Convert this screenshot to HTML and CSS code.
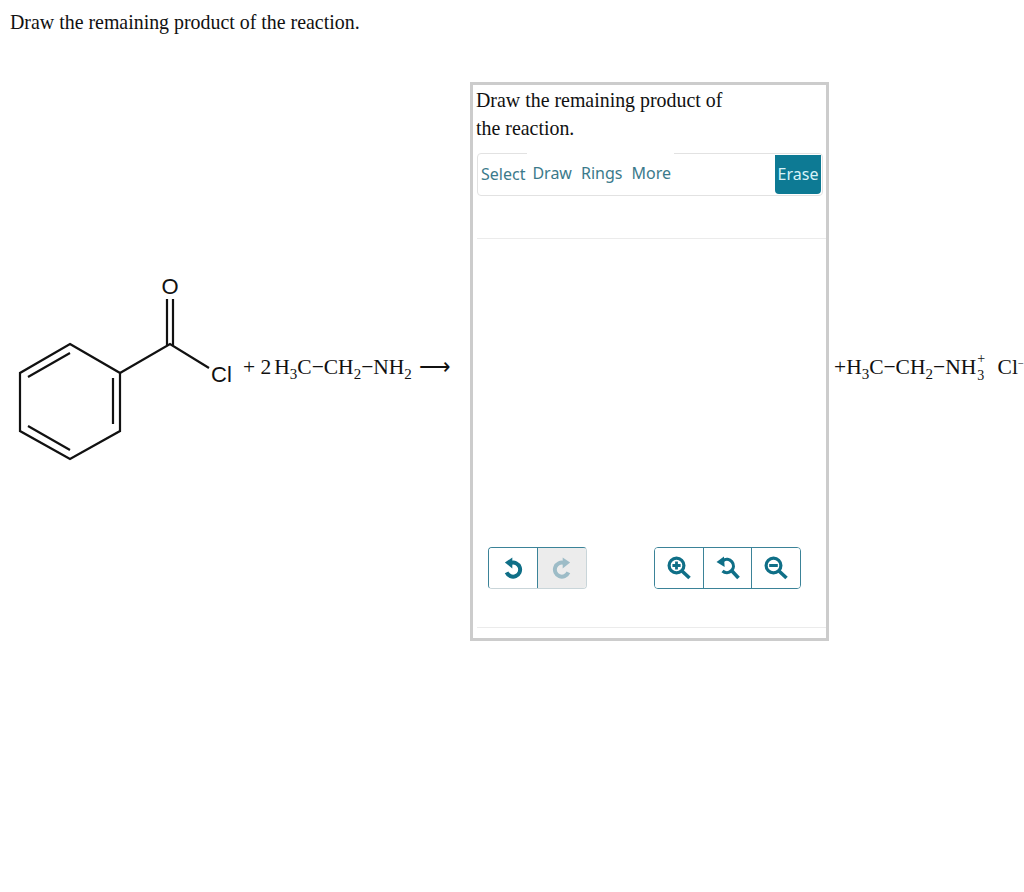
FILE: index.html

```html
<!DOCTYPE html>
<html lang="en">
<head>
    <meta charset="UTF-8">
    <meta name="viewport" content="width=device-width, initial-scale=1.0">
    <title>Draw the remaining product</title>
    <link rel="stylesheet" href="styles.css">
</head>
<body>
    <p class="question">Draw the remaining product of the reaction.</p>

    <div class="reaction">
        <!-- Benzoyl chloride -->
        <svg class="molecule" width="243" height="200" viewBox="0 261 243 200">
            <g fill="none" stroke="#111" stroke-width="2.2">
                <path d="M70 343 L120 372 L120 430 L70 458 L20 430 L20 372 Z"/>
                <path d="M28 376 L70 352 M113 377 L113 423 M28 425 L70 449"/>
                <path d="M120 372 L170 343 L209 367"/>
                <path d="M167 344 L167 298 M173 344 L173 298"/>
            </g>
            <text class="atom" x="170" y="293" text-anchor="middle">O</text>
            <text class="atom" x="211" y="381">Cl</text>
        </svg>

        <div class="equation reagents"><span class="coef">+ 2</span>H<sub>3</sub>C&minus;CH<sub>2</sub>&minus;NH<sub>2</sub> <span class="arrow">&#10230;</span></div>

        <!-- Drawing widget -->
        <div class="widget">
            <p class="prompt">Draw the remaining product of the reaction.</p>
            <div class="toolbar">
                <div class="tabs">
                    <button class="tab select-tab">Select</button>
                    <div class="tab-group">
                        <button class="tab">Draw</button>
                        <button class="tab">Rings</button>
                        <button class="tab">More</button>
                    </div>
                </div>
                <button class="erase">Erase</button>
            </div>
            <div class="canvas">
                <div class="controls">
                    <div class="btn-group history">
                        <button class="icon-btn">
                            <svg width="22" height="22" viewBox="0 0 20 20">
                                <path d="M8 5.4 A6.4 6.4 0 1 1 4.2 14" fill="none" stroke="#0f6f87" stroke-width="3.6"/>
                                <path d="M9.4 0.4 L9.4 10.4 L2.6 5 Z" fill="#0f6f87"/>
                            </svg>
                        </button>
                        <button class="icon-btn disabled">
                            <svg width="22" height="22" viewBox="0 0 20 20">
                                <path d="M12 5.4 A6.4 6.4 0 1 0 15.8 14" fill="none" stroke="#9dbcc7" stroke-width="3.6"/>
                                <path d="M10.6 0.4 L10.6 10.4 L17.4 5 Z" fill="#9dbcc7"/>
                            </svg>
                        </button>
                    </div>
                    <div class="btn-group zoom">
                        <button class="icon-btn">
                            <svg width="24" height="24" viewBox="0 0 24 24">
                                <circle cx="9.5" cy="9.5" r="7.4" fill="none" stroke="#0f6f87" stroke-width="3.2"/>
                                <path d="M15 15 L22.5 22" stroke="#0f6f87" stroke-width="3.6"/>
                                <path d="M5.4 9.5 H13.6 M9.5 5.4 V13.6" stroke="#0f6f87" stroke-width="2.8"/>
                            </svg>
                        </button>
                        <button class="icon-btn">
                            <svg width="24" height="24" viewBox="0 0 24 24">
                                <path d="M7 4.6 A6.6 6.6 0 1 1 6.5 15" fill="none" stroke="#0f6f87" stroke-width="3.2"/>
                                <path d="M16 15 L22.5 22" stroke="#0f6f87" stroke-width="3.6"/>
                                <path d="M8 0.6 L8.6 11 L0.5 6 Z" fill="#0f6f87"/>
                            </svg>
                        </button>
                        <button class="icon-btn">
                            <svg width="24" height="24" viewBox="0 0 24 24">
                                <circle cx="9.5" cy="9.5" r="7.4" fill="none" stroke="#0f6f87" stroke-width="3.2"/>
                                <path d="M15 15 L22.5 22" stroke="#0f6f87" stroke-width="3.6"/>
                                <path d="M5.2 9.5 H13.8" stroke="#0f6f87" stroke-width="3"/>
                            </svg>
                        </button>
                    </div>
                </div>
            </div>
            <div class="widget-footer"></div>
        </div>

        <div class="equation products">+H<sub>3</sub>C&minus;CH<sub>2</sub>&minus;NH<span class="ion"><sup>+</sup><sub>3</sub></span> <span class="chloride">Cl<sup>&minus;</sup></span></div>
    </div>
</body>
</html>
```

FILE: styles.css

```css
* {
    margin: 0;
    padding: 0;
    box-sizing: border-box;
}

body {
    background: #fff;
    color: #111;
    font-family: "Liberation Serif", serif;
    font-size: 19.9px;
    overflow: hidden;
}

.question {
    padding: 10px 10px 0;
    height: 82px;
    line-height: 24px;
}

/* Reaction row */
.reaction {
    display: flex;
    align-items: center;
    width: 1024px;
}

.molecule {
    flex: none;
}

.atom {
    font-family: "Liberation Sans", sans-serif;
    font-size: 22px;
    fill: #111;
}

.equation {
    flex: none;
    white-space: nowrap;
    padding-top: 10px;
    line-height: 24px;
    font-size: 21.5px;
}

.equation sub,
.equation sup {
    font-size: 15px;
    line-height: 0;
}

.equation sub {
    vertical-align: -5px;
}

.reagents {
    width: 227px;
}

.coef {
    margin-right: 3px;
}

.arrow {
    margin-left: 2px;
}

.products {
    margin-left: 5px;
}

.ion {
    display: inline-block;
    width: 13px;
    height: 24px;
    position: relative;
    vertical-align: top;
}

.equation .ion sup,
.equation .ion sub {
    position: absolute;
    left: 1px;
    font-size: 14px;
    vertical-align: baseline;
}

.ion sup {
    top: 4px;
}

.ion sub {
    top: 21px;
}

.chloride {
    margin-left: 3px;
}

.equation .chloride sup {
    font-size: 10.5px;
    vertical-align: 7px;
}

/* Widget */
.widget {
    flex: none;
    width: 359px;
    height: 559px;
    border: 3px solid #ccc;
    padding: 2px 3px 0 3px;
    display: flex;
    flex-direction: column;
}

.prompt {
    line-height: 27.5px;
    width: 260px;
    margin-bottom: 11px;
}

.toolbar {
    display: flex;
    justify-content: space-between;
    align-items: center;
    width: 346px;
    height: 43px;
    margin-left: 1px;
    border: 1px solid #e2e2e2;
    border-radius: 4px;
    padding-right: 1px;
    font-family: "Noto Sans", sans-serif;
}

.tabs {
    display: flex;
    align-items: center;
    height: 41px;
    padding-left: 3px;
}

.select-tab {
    margin-top: -2px;
}

.tab-group {
    display: flex;
    align-items: center;
    gap: 9px;
    width: 147px;
    height: 41px;
    margin-top: -3px;
    margin-left: 2px;
    padding-left: 5px;
    background: #fff;
}

.tab {
    background: none;
    border: none;
    color: #3b7a8b;
    font-family: inherit;
    font-size: 16px;
}

.erase {
    width: 46px;
    height: 39px;
    padding-bottom: 2px;
    background: #0d7a94;
    border: none;
    border-radius: 0 0 4px 4px;
    color: #d8f2f8;
    font-family: inherit;
    font-size: 16px;
}

.canvas {
    flex: 1;
    margin-top: 42px;
    margin-left: 1px;
    border-top: 1px solid #ebebeb;
    border-bottom: 1px solid #ebebeb;
    width: 349px;
    display: flex;
    align-items: flex-end;
    padding: 0 25px 38px 11px;
}

.controls {
    display: flex;
    justify-content: space-between;
    width: 100%;
}

.btn-group {
    display: flex;
    height: 42px;
    border: 1px solid #3b8398;
    border-radius: 4px;
    overflow: hidden;
}

.history {
    width: 99px;
    border-color: #3b8398 #c9d5d9 #c9d5d9 #3b8398;
}

.zoom {
    width: 147px;
}

.icon-btn {
    flex: 1;
    width: 49px;
    background: #fff;
    border: none;
    border-right: 1px solid #3b8398;
    display: flex;
    align-items: center;
    justify-content: center;
}

.icon-btn:last-child {
    border-right: none;
}

.icon-btn.disabled {
    background: #ececec;
}

.widget-footer {
    height: 10px;
}
```
